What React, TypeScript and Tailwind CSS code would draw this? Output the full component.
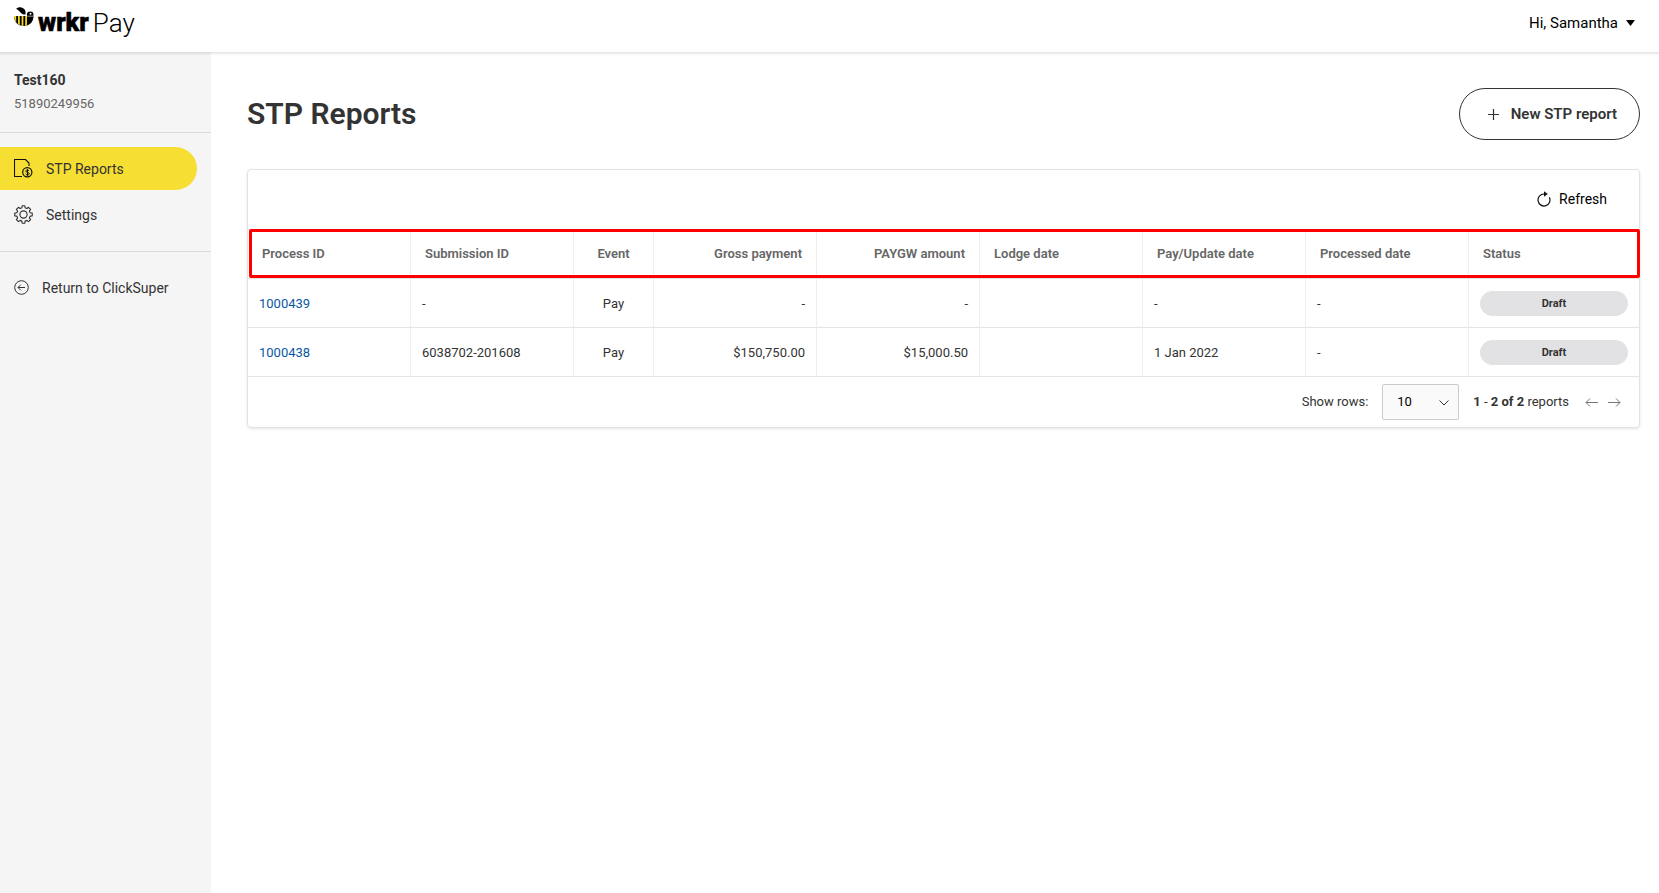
import { ReactNode } from "react";
import clsx from "clsx";

type Align = "left" | "center" | "right";

interface Column {
  key: keyof Report;
  label: string;
  align: Align;
  width: string;
}

interface Report {
  processId: string;
  submissionId: string;
  event: string;
  gross: string;
  paygw: string;
  lodged: string;
  payDate: string;
  processed: string;
  status: string;
}

const columns: Column[] = [
  { key: "processId", label: "Process ID", align: "left", width: "w-[163px]" },
  { key: "submissionId", label: "Submission ID", align: "left", width: "w-[163px]" },
  { key: "event", label: "Event", align: "center", width: "w-[80px]" },
  { key: "gross", label: "Gross payment", align: "right", width: "w-[163px]" },
  { key: "paygw", label: "PAYGW amount", align: "right", width: "w-[163px]" },
  { key: "lodged", label: "Lodge date", align: "left", width: "w-[163px]" },
  { key: "payDate", label: "Pay/Update date", align: "left", width: "w-[163px]" },
  { key: "processed", label: "Processed date", align: "left", width: "w-[163px]" },
  { key: "status", label: "Status", align: "left", width: "w-[170px]" },
];

const reports: Report[] = [
  {
    processId: "1000439",
    submissionId: "-",
    event: "Pay",
    gross: "-",
    paygw: "-",
    lodged: "",
    payDate: "-",
    processed: "-",
    status: "Draft",
  },
  {
    processId: "1000438",
    submissionId: "6038702-201608",
    event: "Pay",
    gross: "$150,750.00",
    paygw: "$15,000.50",
    lodged: "",
    payDate: "1 Jan 2022",
    processed: "-",
    status: "Draft",
  },
];

const alignment: Record<Align, string> = {
  left: "text-left",
  center: "text-center",
  right: "text-right",
};

const BeeIcon = () => (
  <svg width="20" height="20" viewBox="0 0 20 20" aria-hidden="true">
    <path d="M2 1.800C4.500-.8 9-.3 10.800 2.800c.8 1.400.9 2.800.7 4.700C9.600 7.800 8 7.200 6.800 5.800 5.300 4.200 4 2.600 2 1.800Z" fill="#000" />
    <path d="M0 9h19.500c.1 5.800-4 10-9.700 10S0 15 0 9Z" fill="#000" />
    <path d="M0 9h2.200v6.200C.8 13.500.1 11.400 0 9ZM4 9h1.800v9L4 17.100ZM7.600 9h1.800v10l-1.800-.3ZM11.200 9H13v9.400l-1.800.5Z" fill="#f0d722" />
    <circle cx="16.200" cy="7.800" r="3.300" fill="#000" />
    <circle cx="16.500" cy="6.800" r="1" fill="#fff" />
    <path d="M13.200 9.200h6.300" stroke="#fff" strokeWidth=".6" />
  </svg>
);

const ReportIcon = () => (
  <svg width="19" height="19" viewBox="0 0 19 19" fill="none" stroke="#111" aria-hidden="true">
    <path d="M8 17.500H.5V.5h11l3.500 3.500v3" strokeWidth="1.100" />
    <circle cx="13.300" cy="13.300" r="4.600" strokeWidth="1.200" />
    <path d="M15.200 12c-.3-.6-.9-.9-1.700-.9-1 0-1.700.4-1.700 1.100 0 1.700 3.500.8 3.500 2.500 0 .7-.7 1.200-1.800 1.200-.9 0-1.500-.3-1.800-.9M13.500 10.200v6.600" />
  </svg>
);

const GearIcon = () => (
  <svg width="19" height="19" viewBox="0 0 20 20" fill="none" stroke="#333" strokeWidth="1.200" strokeLinejoin="round" aria-hidden="true">
    <path d="M8.300 2.900 8.600.8h2.800l.3 2.100 1.900.8 1.700-1.300 2.200 2.200-1.300 1.700.8 1.900 2.200.4v2.800l-2.200.3-.8 1.900 1.300 1.700-2.200 2.200-1.700-1.300-1.900.8-.3 2.200H8.600L8.300 17l-1.900-.8-1.700 1.300-2.200-2.200 1.300-1.700-.8-1.900-2.200-.3V8.600L3 8.200l.8-1.900-1.300-1.700 2.200-2.200 1.700 1.300Z" />
    <circle cx="10" cy="10" r="3.800" />
  </svg>
);

const ReturnIcon = () => (
  <svg width="15" height="15" viewBox="0 0 15 15" fill="none" stroke="#333" aria-hidden="true">
    <circle cx="7.500" cy="7.500" r="6.800" />
    <path d="M11 7.500H4M6.800 4.700 4 7.500l2.800 2.800" />
  </svg>
);

const RefreshIcon = () => (
  <svg width="14" height="16" viewBox="0 0 14 16" fill="none" aria-hidden="true">
    <path d="M8 3H7a6 6 0 1 0 5.300 3.200" stroke="#111" strokeWidth="1.200" />
    <path d="M7 .2 10.800 3 7 5.800Z" fill="#111" />
  </svg>
);

const ArrowIcon = ({ flipped = false }: { flipped?: boolean }) => (
  <svg width="13" height="9" viewBox="0 0 13 9" fill="none" stroke="#777" aria-hidden="true">
    <path d={flipped ? "M0 4.500h12M8 .5l4 4-4 4" : "M13 4.500H1M5 .5l-4 4 4 4"} />
  </svg>
);

interface NavItemProps {
  icon: ReactNode;
  label: string;
  active?: boolean;
}

const NavItem = ({ icon, label, active }: NavItemProps) => (
  <a
    href="#"
    aria-current={active ? "page" : undefined}
    className={clsx(
      "mr-3.5 flex h-[43px] items-center gap-[13px] rounded-r-full pl-3.5 text-sm text-[#333]",
      active && "bg-[#f7de33]"
    )}
  >
    {icon}
    {label}
  </a>
);

const Header = () => (
  <header className="z-10 flex h-[52px] shrink-0 items-center justify-between pr-6 pl-3.5 pb-1.5 shadow-[0_1px_2px_1px_rgba(0,0,0,0.1)]">
    <a href="#" className="flex items-start pb-1 text-black">
      <BeeIcon />
      <span className="ml-1 pt-1 text-[25px] leading-6 font-black [-webkit-text-stroke:0.5px_#000]">wrkr</span>
      <span className="ml-1 pt-1 text-[26px] leading-6 font-light">Pay</span>
    </a>
    <button type="button" className="flex items-center gap-2 text-[15px] text-black">
      Hi, Samantha
      <svg width="9" height="6" viewBox="0 0 9 6" aria-hidden="true">
        <path d="M0 0h9L4.500 6Z" />
      </svg>
    </button>
  </header>
);

const Sidebar = () => (
  <aside className="w-[211px] shrink-0 bg-[#f5f5f5]">
    <div className="border-b border-[#dadada] pt-[18px] pb-[19px] pl-3.5">
      <p className="text-sm leading-5 font-bold text-[#333]">Test160</p>
      <p className="mt-[5px] text-[13px] leading-[18px] text-[#666]">51890249956</p>
    </div>
    <nav>
      <div className="flex flex-col gap-[3px] border-b border-[#dadada] pt-3.5 pb-[15px]">
        <NavItem icon={<ReportIcon />} label="STP Reports" active />
        <NavItem icon={<GearIcon />} label="Settings" />
      </div>
      <div className="py-3.5">
        <NavItem icon={<ReturnIcon />} label="Return to ClickSuper" />
      </div>
    </nav>
  </aside>
);

const Cell = ({ column, report }: { column: Column; report: Report }) => {
  const value = report[column.key];
  if (column.key === "processId") {
    return (
      <a href="#" className="text-[#0a57a4]">
        {value}
      </a>
    );
  }
  if (column.key === "status") {
    return (
      <span className="block rounded-full bg-[#e2e2e4] text-center text-[11px] leading-[25px] font-bold">
        {value}
      </span>
    );
  }
  return <>{value}</>;
};

const ReportsTable = () => (
  <table className="w-full table-fixed border-separate border-spacing-0 text-[13px]">
    <thead>
      {/* the heading row is highlighted with a red frame */}
      <tr className="relative after:pointer-events-none after:absolute after:top-0 after:-right-px after:bottom-px after:left-px after:rounded-xs after:border-3 after:border-[#f00]">
        {columns.map((column) => (
          <th
            key={column.key}
            scope="col"
            className={clsx(
              "h-[50px] border-y border-r border-[#e4e4e4] border-r-[#efefef] px-3.5 font-semibold text-[#666] last:border-r-0",
              column.width,
              alignment[column.align]
            )}
          >
            {column.label}
          </th>
        ))}
      </tr>
    </thead>
    <tbody>
      {reports.map((report) => (
        <tr key={report.processId}>
          {columns.map((column) => (
            <td
              key={column.key}
              className={clsx(
                "h-[49px] border-r border-b border-[#e4e4e4] border-r-[#efefef] px-[11px] last:border-r-0",
                column.key !== "status" && "pt-px",
                alignment[column.align]
              )}
            >
              <Cell column={column} report={report} />
            </td>
          ))}
        </tr>
      ))}
    </tbody>
  </table>
);

const Pagination = () => (
  <div className="flex h-[50px] items-center justify-end pr-[18px] text-[13px]">
    <label htmlFor="rows">Show rows:</label>
    <div className="relative ml-3.5">
      <select
        id="rows"
        defaultValue="10"
        className="h-9 w-[77px] appearance-none rounded-xs border border-[#ccc] bg-[#fafafa] pl-3.5 text-[13px] text-black"
      >
        <option>10</option>
        <option>25</option>
        <option>50</option>
      </select>
      <svg
        className="pointer-events-none absolute top-4 right-2.5"
        width="10"
        height="6"
        viewBox="0 0 10 6"
        fill="none"
        stroke="#333"
        aria-hidden="true"
      >
        <path d="m.5.5 4.500 4.500L9.500.5" />
      </svg>
    </div>
    <p className="ml-3.5">
      <b>1</b> - <b>2 of 2</b> reports
    </p>
    <button type="button" aria-label="Previous page" className="ml-4">
      <ArrowIcon />
    </button>
    <button type="button" aria-label="Next page" className="ml-2.5">
      <ArrowIcon flipped />
    </button>
  </div>
);

export default function App() {
  return (
    <div className="flex min-h-screen flex-col bg-white font-[Roboto,sans-serif] text-[#333]">
      <Header />
      <div className="flex flex-1">
        <Sidebar />
        <main className="min-w-0 flex-1 pt-9 pr-[19px] pb-9 pl-9">
          <div className="flex items-center justify-between">
            <h1 className="text-[30px] leading-10 font-semibold">STP Reports</h1>
            <button
              type="button"
              className="flex h-[52px] items-center gap-3 rounded-full border border-[#333] px-[22px] pl-7 text-[15px] font-semibold"
            >
              <svg width="11" height="11" viewBox="0 0 11 11" stroke="#333" strokeWidth="1.200" aria-hidden="true">
                <path d="M5.500 0v11M0 5.500h11" />
              </svg>
              New STP report
            </button>
          </div>
          <section className="mt-[29px] rounded-sm border border-[#e2e2e2] shadow-[0_1px_3px_rgba(0,0,0,0.1)]">
            <div className="flex h-[59px] items-center justify-end pr-8 pb-0.5">
              <button type="button" className="flex items-center gap-2 text-sm text-black">
                <RefreshIcon />
                Refresh
              </button>
            </div>
            <ReportsTable />
            <Pagination />
          </section>
        </main>
      </div>
    </div>
  );
}
